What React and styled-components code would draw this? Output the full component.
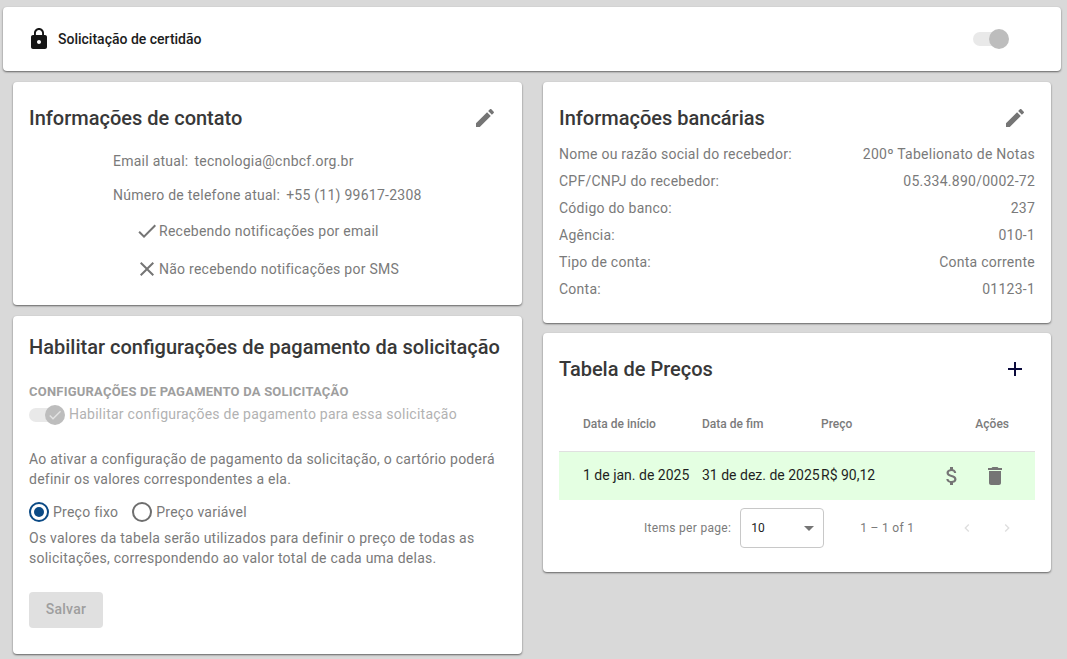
import React from 'react';
import styled, { createGlobalStyle } from 'styled-components';

const GlobalStyle = createGlobalStyle`
  html, body {
    margin: 0;
    background: #d9d9d9;
    font-family: Roboto, "Liberation Sans", sans-serif;
    overflow: hidden;
  }
  * {
    box-sizing: border-box;
  }
`;

const Page = styled.div`
  width: 1067px;
  height: 659px;
  padding: 7px 6px 0 3px;
  background: #d9d9d9;
`;

const Card = styled.section`
  background: #fff;
  border-radius: 4px;
  box-shadow: 0 1px 2px rgba(0, 0, 0, 0.55);
`;

const TopBar = styled(Card)`
  display: flex;
  align-items: center;
  height: 64px;
  padding: 0 54px 0 24px;
`;

const TopTitle = styled.span`
  margin-left: 7px;
  font-size: 14px;
  font-weight: 500;
  color: #1c1c1c;
`;

const Columns = styled.div`
  display: grid;
  grid-template-columns: 509px 508px;
  gap: 21px;
  margin: 11px 10px 0;
  align-items: start;
`;

const Column = styled.div`
  display: flex;
  flex-direction: column;
  gap: ${(p) => p.$gap}px;
`;

const Panel = styled(Card)`
  height: ${(p) => p.$height}px;
  padding: 0 16px;
`;

const PanelHeader = styled.header`
  display: flex;
  align-items: center;
  justify-content: space-between;
  height: 36px;
  margin-top: ${(p) => p.$top ?? 18}px;
  padding-right: ${(p) => p.$right ?? 8}px;
`;

const Title = styled.h2`
  margin: 0;
  font-size: 20px;
  line-height: 32px;
  font-weight: 500;
  white-space: nowrap;
  color: #383838;
`;

const Text = styled.p`
  margin: 0;
  font-size: 14px;
  line-height: 20px;
  letter-spacing: 0.25px;
  color: #7a7a7a;
`;

const ContactList = styled.div`
  padding: 15px 0 0 84px;
`;

const ContactLine = styled(Text)`
  margin-bottom: 14px;
`;

const ContactValue = styled.span`
  margin-left: 6px;
`;

const NoticeLine = styled(Text)`
  display: flex;
  align-items: center;
  height: 24px;
  margin: 0 0 14px 22px;
`;

const BankRow = styled(Text)`
  display: flex;
  justify-content: space-between;
  height: 27px;
  line-height: 27px;
`;

const BankList = styled.div`
  margin-top: 5px;
`;

const SectionLabel = styled.h3`
  margin: 19px 0 0;
  font-size: 13px;
  line-height: 16px;
  font-weight: 700;
  letter-spacing: 0.22px;
  color: #9e9e9e;
`;

const ToggleRow = styled.div`
  display: flex;
  align-items: center;
  height: 20px;
  margin-top: 5px;
`;

const Track = styled.span`
  position: relative;
  display: inline-block;
  flex: none;
  width: 34px;
  height: 14px;
  border-radius: 7px;
  background: #e9e9e9;
  margin-left: ${(p) => (p.$push ? 'auto' : '0')};
`;

const Thumb = styled.span`
  position: absolute;
  top: -3px;
  right: -2px;
  display: flex;
  align-items: center;
  justify-content: center;
  width: 20px;
  height: 20px;
  border-radius: 50%;
  background: #bdbdbd;
`;

const ToggleLabel = styled(Text)`
  margin: 0 0 2px 6px;
  color: #b2b2b2;
`;

const Intro = styled(Text)`
  margin-top: 24px;
`;

const RadioRow = styled.div`
  display: flex;
  align-items: center;
  height: 24px;
  margin-top: 11px;
`;

const Radio = styled.span`
  display: flex;
  align-items: center;
  justify-content: center;
  flex: none;
  width: 20px;
  height: 20px;
  border-radius: 50%;
  border: 2px solid ${(p) => (p.$checked ? '#0b4a85' : '#6e6e6e')};
  &::after {
    content: '';
    display: ${(p) => (p.$checked ? 'block' : 'none')};
    width: 10px;
    height: 10px;
    border-radius: 50%;
    background: #0b4a85;
  }
`;

const RadioLabel = styled(Text)`
  margin: 0 14px 0 4px;
`;

const Help = styled(Text)`
  margin-top: 4px;
`;

const SaveButton = styled.button`
  display: block;
  width: 74px;
  height: 36px;
  margin-top: 24px;
  padding: 0 0 2px;
  border: 0;
  border-radius: 4px;
  background: #e0e0e0;
  color: #9e9e9e;
  font: 500 14px Roboto, sans-serif;
  letter-spacing: 0.25px;
`;

const PriceTable = styled.table`
  width: 476px;
  margin-top: 11px;
  border-collapse: collapse;
  table-layout: fixed;
`;

const HeadCell = styled.th`
  width: ${(p) => p.$width || 'auto'};
  height: 53px;
  padding: 0 ${(p) => (p.$align === 'right' ? '26px' : '0')} 0 ${(p) => (p.$first ? '24px' : '0')};
  border-bottom: 1px solid #e0e0e0;
  font-size: 12px;
  font-weight: 500;
  text-align: ${(p) => p.$align || 'left'};
  color: #7b7b7b;
`;

const BodyRow = styled.tr`
  background: #e4ffe2;
`;

const BodyCell = styled.td`
  height: 49px;
  padding: 0 0 2px ${(p) => (p.$first ? '24px' : '0')};
  font-size: 14px;
  white-space: nowrap;
  color: #1f1f1f;
`;

const RowActions = styled.div`
  display: flex;
  align-items: center;
  gap: 19px;
  padding-top: 2px;
`;

const Paginator = styled.div`
  display: flex;
  align-items: center;
  height: 40px;
  margin-top: 8px;
  padding-left: 85px;
  font-size: 12px;
  color: #7b7b7b;
`;

const PerPageLabel = styled.span`
  letter-spacing: 0.3px;
`;

const PageSelect = styled.div`
  display: flex;
  align-items: center;
  justify-content: space-between;
  width: 84px;
  height: 40px;
  margin-left: 9px;
  padding: 0 9px 0 10px;
  border: 1px solid #c8c8c8;
  border-radius: 4px;
  color: #222;
`;

const Arrow = styled.span`
  width: 0;
  height: 0;
  border-left: 5px solid transparent;
  border-right: 5px solid transparent;
  border-top: 5px solid #757575;
`;

const RangeLabel = styled.span`
  margin-left: 36px;
  width: 99px;
  letter-spacing: 0.3px;
`;

const Pager = styled.div`
  display: flex;
  gap: 24px;
`;

const Icon = ({ d, size = 24, color = '#757575' }) => (
  <svg width={size} height={size} viewBox="0 0 24 24" fill={color} style={{ flex: 'none' }}>
    <path d={d} />
  </svg>
);

const icons = {
  lock: 'M18 8h-1V6c0-2.76-2.24-5-5-5S7 3.24 7 6v2H6c-1.1 0-2 .9-2 2v10c0 1.1.9 2 2 2h12c1.1 0 2-.9 2-2V10c0-1.1-.9-2-2-2zm-6 9c-1.1 0-2-.9-2-2s.9-2 2-2 2 .9 2 2-.9 2-2 2zm3.1-9H8.9V6c0-1.71 1.39-3.1 3.1-3.1 1.71 0 3.1 1.39 3.1 3.1v2z',
  edit: 'M3 17.25V21h3.75L17.81 9.94l-3.75-3.75L3 17.25zM20.71 7.04c.39-.39.39-1.02 0-1.41l-2.34-2.34c-.39-.39-1.02-.39-1.41 0l-1.83 1.83 3.75 3.75 1.83-1.83z',
  check: 'M9 16.17L4.83 12l-1.42 1.41L9 19 21 7l-1.41-1.41z',
  close: 'M19 6.41L17.59 5 12 10.59 6.41 5 5 6.41 10.59 12 5 17.59 6.41 19 12 13.41 17.59 19 19 17.59 13.41 12z',
  add: 'M19 13h-6v6h-2v-6H5v-2h6V5h2v6h6v2z',
  money: 'M11.8 10.9c-2.27-.59-3-1.2-3-2.15 0-1.09 1.01-1.85 2.7-1.85 1.78 0 2.44.85 2.5 2.1h2.21c-.07-1.72-1.12-3.3-3.21-3.81V3h-3v2.16c-1.94.42-3.5 1.68-3.5 3.61 0 2.31 1.91 3.46 4.7 4.13 2.5.6 3 1.48 3 2.41 0 .69-.49 1.79-2.7 1.79-2.06 0-2.87-.92-2.98-2.1h-2.2c.12 2.19 1.76 3.42 3.68 3.83V21h3v-2.15c1.95-.37 3.5-1.5 3.5-3.55 0-2.84-2.43-3.81-4.7-4.4z',
  trash: 'M6 19c0 1.1.9 2 2 2h8c1.1 0 2-.9 2-2V7H6v12zM19 4h-3.5l-1-1h-5l-1 1H5v2h14V4z',
  prev: 'M15.41 7.41L14 6l-6 6 6 6 1.41-1.41L10.83 12z',
  next: 'M10 6L8.59 7.41 13.17 12l-4.58 4.59L10 18l6-6z',
};

const bankRows = [
  ['Nome ou razão social do recebedor:', '200º Tabelionato de Notas'],
  ['CPF/CNPJ do recebedor:', '05.334.890/0002-72'],
  ['Código do banco:', '237'],
  ['Agência:', '010-1'],
  ['Tipo de conta:', 'Conta corrente'],
  ['Conta:', '01123-1'],
];

export default function App() {
  return (
    <Page>
      <GlobalStyle />
      <TopBar>
        <Icon d={icons.lock} color="#151515" />
        <TopTitle>Solicitação de certidão</TopTitle>
        <Track $push>
          <Thumb />
        </Track>
      </TopBar>
      <Columns>
        <Column $gap={11}>
          <Panel $height={223}>
            <PanelHeader $right={9}>
              <Title>Informações de contato</Title>
              <Icon d={icons.edit} />
            </PanelHeader>
            <ContactList>
              <ContactLine>
                Email atual:<ContactValue>tecnologia@cnbcf.org.br</ContactValue>
              </ContactLine>
              <ContactLine>
                Número de telefone atual:<ContactValue>+55 (11) 99617-2308</ContactValue>
              </ContactLine>
              <NoticeLine>
                <Icon d={icons.check} />
                Recebendo notificações por email
              </NoticeLine>
              <NoticeLine>
                <Icon d={icons.close} />
                Não recebendo notificações por SMS
              </NoticeLine>
            </ContactList>
          </Panel>
          <Panel $height={338}>
            <PanelHeader $top={13}>
              <Title>Habilitar configurações de pagamento da solicitação</Title>
            </PanelHeader>
            <SectionLabel>CONFIGURAÇÕES DE PAGAMENTO DA SOLICITAÇÃO</SectionLabel>
            <ToggleRow>
              <Track>
                <Thumb>
                  <Icon d={icons.check} size={16} color="#e4e4e4" />
                </Thumb>
              </Track>
              <ToggleLabel>Habilitar configurações de pagamento para essa solicitação</ToggleLabel>
            </ToggleRow>
            <Intro>
              Ao ativar a configuração de pagamento da solicitação, o cartório poderá definir os
              valores correspondentes a ela.
            </Intro>
            <RadioRow>
              <Radio $checked />
              <RadioLabel>Preço fixo</RadioLabel>
              <Radio />
              <RadioLabel>Preço variável</RadioLabel>
            </RadioRow>
            <Help>
              Os valores da tabela serão utilizados para definir o preço de todas as solicitações,
              correspondendo ao valor total de cada uma delas.
            </Help>
            <SaveButton disabled>Salvar</SaveButton>
          </Panel>
        </Column>
        <Column $gap={10}>
          <Panel $height={241}>
            <PanelHeader>
              <Title>Informações bancárias</Title>
              <Icon d={icons.edit} />
            </PanelHeader>
            <BankList>
              {bankRows.map(([label, value]) => (
                <BankRow key={label}>
                  <span>{label}</span>
                  <span>{value}</span>
                </BankRow>
              ))}
            </BankList>
          </Panel>
          <Panel $height={239}>
            <PanelHeader>
              <Title>Tabela de Preços</Title>
              <Icon d={icons.add} color="#0a0a3c" />
            </PanelHeader>
            <PriceTable>
              <thead>
                <tr>
                  <HeadCell $first $width="143px">Data de início</HeadCell>
                  <HeadCell $width="119px">Data de fim</HeadCell>
                  <HeadCell $width="119px">Preço</HeadCell>
                  <HeadCell $align="right">Ações</HeadCell>
                </tr>
              </thead>
              <tbody>
                <BodyRow>
                  <BodyCell $first>1 de jan. de 2025</BodyCell>
                  <BodyCell>31 de dez. de 2025</BodyCell>
                  <BodyCell>R$ 90,12</BodyCell>
                  <BodyCell>
                    <RowActions>
                      <Icon d={icons.money} />
                      <Icon d={icons.trash} />
                    </RowActions>
                  </BodyCell>
                </BodyRow>
              </tbody>
            </PriceTable>
            <Paginator>
              <PerPageLabel>Items per page:</PerPageLabel>
              <PageSelect>
                10
                <Arrow />
              </PageSelect>
              <RangeLabel>1 – 1 of 1</RangeLabel>
              <Pager>
                <Icon d={icons.prev} size={16} color="#dedede" />
                <Icon d={icons.next} size={16} color="#dedede" />
              </Pager>
            </Paginator>
          </Panel>
        </Column>
      </Columns>
    </Page>
  );
}
